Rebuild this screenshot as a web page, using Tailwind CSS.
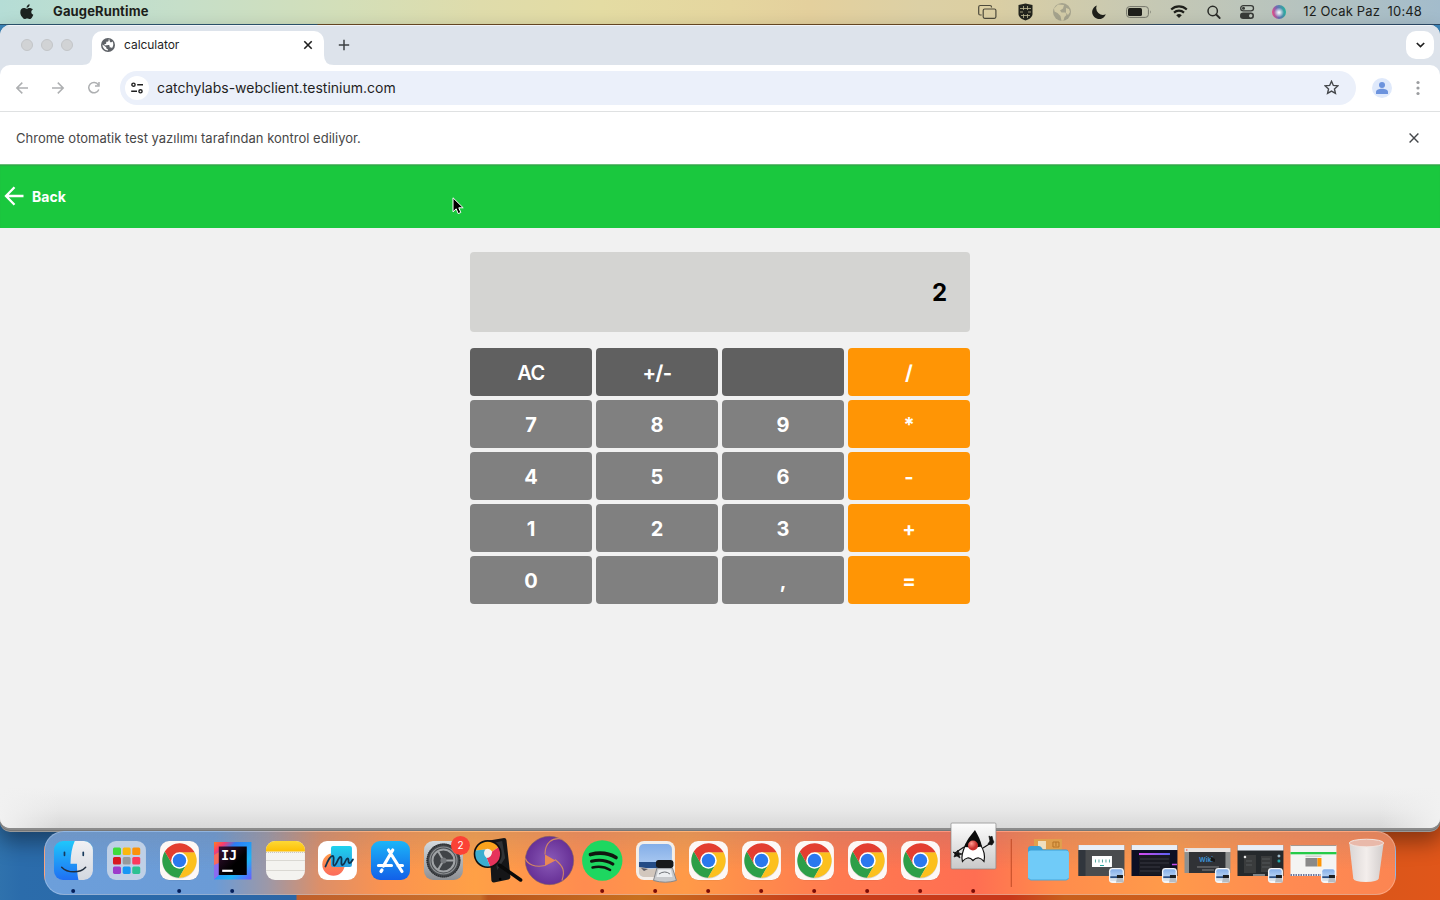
<!DOCTYPE html>
<html lang="tr">
<head>
<meta charset="utf-8">
<title>calculator</title>
<script src="https://cdn.jsdelivr.net/npm/@tailwindcss/browser@4"></script>
</head>
<body class="w-[1440px] h-[900px] overflow-hidden flex flex-col font-['Inter','Liberation_Sans',sans-serif] bg-[linear-gradient(180deg,#3c86bb_0px,#3c86bb_60px,transparent_61px),linear-gradient(90deg,#2f72ad_0px,#2b6cab_20px,#2b66a6_296px,#c0602c_297px,#c9702a_480px,#b8541c_488px,#c8701f_640px,#c8401a_800px,#c8371a_1010px,#c8601c_1065px,#d5561a_1300px,#e0561a_1440px)]">

<!-- Menu bar -->
<header class="h-6 shrink-0 flex items-center justify-between pl-5 pr-[18px] text-[#1d1f1c] bg-[linear-gradient(90deg,#b5ddd6_0px,#c6dfc9_180px,#d3dfb9_340px,#dfdcab_480px,#e4dca3_600px,#e5d69f_730px,#e4d09d_810px,#dcd0a5_920px,#dccfa2_980px,#c8c9b2_1130px,#b6c3bf_1300px,#a3bccc_1440px)]">
  <div class="flex items-center">
    <svg class="w-[14px] h-4 -mt-px" viewBox="0 0 14 16" fill="#1d2220"><path d="M9.6.2c.1 1-.3 1.900-.8 2.500-.6.7-1.400 1.100-2.200 1.100-.1-.9.300-1.900.8-2.400C8 .7 8.900.3 9.600.2zM12.900 5.500c-1 .6-1.600 1.500-1.600 2.600 0 1.300.8 2.300 2 2.700-.3.900-.7 1.700-1.200 2.400-.7 1-1.300 1.900-2.400 1.900-1 0-1.300-.6-2.500-.6s-1.600.6-2.500.6c-1 0-1.800-1-2.500-2C.8 11.500.3 9.800.3 8.200c0-2.700 1.700-4.100 3.500-4.100 1.100 0 2 .7 2.700.7s1.700-.8 3-.8c1.300 0 2.600.5 3.400 1.500z"/></svg>
    <span class="ml-[19px] -mt-[2px] text-[13px] font-bold leading-6 tracking-[0.13px]">GaugeRuntime</span>
  </div>
  <div class="flex items-center">
    <svg class="w-[325px] h-6" viewBox="0 0 325 24" fill="none">
      <g stroke="#4e4b3c" stroke-width="1.200"><rect x="5.200" y="9" width="12.700" height="9.300" rx="1.500"/><path d="M3.700 15h-1.500a1.500 1.500 0 0 1-1.500-1.500V7a1.500 1.500 0 0 1 1.500-1.500h9.800a1.500 1.500 0 0 1 1.500 1.500v.6"/></g>
      <path d="M47.500 3.500l7 1.500v9c0 3.500-4 5.500-7 6.500-3-1-7-3-7-6.500V5z" fill="#23241d"/>
      <path d="M42 8.500h11M42 12h11M43 15.500h9M45.500 6v12M49.500 6v12" stroke="#bdb892" stroke-width=".8"/><rect x="45" y="10" width="5" height="4" fill="#23241d"/>
      <circle cx="84" cy="12" r="9" fill="#a5a38d"/><path d="M80 4.500l6 .5-1 3.500-3 2 1.500 2h4l1 2.500-2 2-1 3.500-2 .5-1-5-3-3-3-1.500-.5-3zM88 8l3 1 1 3-2 3-2-2z" fill="#d2cba7"/>
      <path d="M118.800 5.500a7 7 0 1 0 9 8.800 6.800 6.800 0 0 1-9-8.800z" fill="#1f201b"/>
      <rect x="148.600" y="6.600" width="21.800" height="10.800" rx="3" stroke="#74766a"/><rect x="150" y="8" width="14" height="8" rx="1.600" fill="#1f201b"/><path d="M172 10.200q1.600 1.700 0 3.600z" fill="#74766a"/>
      <g stroke="#1f201b" stroke-width="2.200"><path d="M193.200 9.500a11.500 11.500 0 0 1 15.600 0"/><path d="M196 12.600a7.500 7.500 0 0 1 10 0"/></g><path d="M198.200 15.200a4.200 4.200 0 0 1 5.600 0L201 18z" fill="#1f201b"/>
      <circle cx="234.700" cy="11" r="4.700" stroke="#292b27" stroke-width="1.500"/><path d="M238.200 14.500l3.500 3.500" stroke="#292b27" stroke-width="1.800" stroke-linecap="round"/>
      <rect x="262.700" y="5.700" width="12.800" height="5.200" rx="2.600" stroke="#383b38" stroke-width="1.300"/><circle cx="265.500" cy="8.300" r="1.500" fill="#383b38"/><rect x="262" y="12.500" width="14" height="6.400" rx="3.200" fill="#383b38"/><circle cx="272.700" cy="15.700" r="1.700" fill="#bcc5bb"/>
      <defs><radialGradient id="siri"><stop offset="0" stop-color="#fff"/><stop offset=".35" stop-color="#fff" stop-opacity=".7"/><stop offset="1" stop-color="#fff" stop-opacity="0"/></radialGradient><linearGradient id="siri2" x1="0" y1=".6" x2="1" y2=".4"><stop stop-color="#ee4a86"/><stop offset=".4" stop-color="#6d6bb5"/><stop offset="1" stop-color="#22b59d"/></linearGradient></defs>
      <circle cx="301" cy="12" r="7" fill="url(#siri2)"/><circle cx="301" cy="12.500" r="5" fill="url(#siri)"/>
    </svg>
    <span class="w-[119px] -mt-[2px] text-right text-[13px] leading-6 whitespace-pre tracking-[0.14px]">12 Ocak Paz  10:48</span>
  </div>
</header>

<!-- Browser window -->
<div class="h-px shrink-0 bg-[linear-gradient(90deg,#2c5570_0px,#2c5570_317px,#6b4a24_318px,#6b4a24_1080px,#2c4a68_1160px)]"></div>
<main class="h-[803px] shrink-0 flex flex-col rounded-[10px] overflow-hidden bg-[#f1f1f1] shadow-[0_2px_0_#8b8b8b,0_3px_0_#777,0_4px_0_#999,0_12px_22px_2px_rgba(0,0,0,0.4)]">
  <div class="h-10 shrink-0 flex items-end bg-[#dde3eb] border-t border-white/60">
    <div class="flex gap-2 mb-[14px] ml-[21px]">
      <i class="size-3 rounded-full bg-[#d1d3d5] border border-[#c3c5c8]"></i>
      <i class="size-3 rounded-full bg-[#d1d3d5] border border-[#c3c5c8]"></i>
      <i class="size-3 rounded-full bg-[#d1d3d5] border border-[#c3c5c8]"></i>
    </div>
    <svg class="ml-[9px] w-[10px] h-[10px]" viewBox="0 0 10 10"><path d="M10 0v10H0q10 0 10-10" fill="#fff"/></svg>
    <div class="w-[232px] h-[34px] bg-white rounded-t-[10px] flex items-center pl-[9px]">
      <svg class="size-[14px] mt-[-6px]" viewBox="0 0 14 14"><circle cx="7" cy="7" r="7" fill="#5f6368"/><path d="M8.300 1.600v.7c0 .8-.6 1.300-1.400 1.300H5.600v1.300c0 .4-.3.700-.7.700H3.600v1.400h4.100c.4 0 .7.3.7.700v2h.7c.6 0 1.100.4 1.300 1 1.400-1.400 2.300-3.300 1.900-5.200-.1-.5-.2-.9-.4-1.300-.8.900-2.400.9-2.600-.3V3.300c0-.6-.3-1-.3-1.700zM6.300 12.500v-1.400c-.8 0-1.400-.6-1.400-1.400v-.7L1.600 5.800c-.6 3.300 1.700 6.300 4.700 6.700z" fill="#fff" transform="rotate(-8 7 7)"/></svg>
      <span class="ml-[9px] mt-[-6px] text-xs text-[#1f1f1f] tracking-[-0.04px] flex-1">calculator</span>
      <svg class="size-[10px] mr-[11px] mt-[-6px]" viewBox="0 0 10 10" stroke="#1f1f1f" stroke-width="1.600"><path d="M1.300 1.300l7.400 7.400M8.700 1.300L1.300 8.700"/></svg>
    </div>
    <svg class="w-[10px] h-[10px]" viewBox="0 0 10 10"><path d="M0 0v10h10Q0 10 0 0" fill="#fff"/></svg>
    <svg class="ml-1 mb-[14px] size-3" viewBox="0 0 12 12" stroke="#3c4043" stroke-width="1.500"><path d="M6 .8v10.400M.8 6h10.400"/></svg>
    <div class="ml-auto mr-[6px] mb-[6px] size-7 rounded-[10px] bg-white flex items-center justify-center">
      <svg class="w-[9px] h-[6px]" viewBox="0 0 9 6" fill="none" stroke="#1f1f1f" stroke-width="1.700"><path d="M.8 1l3.700 3.600L8.200 1"/></svg>
    </div>
  </div>

  <div class="shrink-0 bg-[#dde3eb]">
    <div class="h-[47px] bg-white rounded-t-[10px] border-b border-[#dfe1e2] flex items-center">
      <svg class="ml-4 w-[88px] h-4" viewBox="0 0 88 16" fill="none" stroke="#adafb1" stroke-width="1.500"><path d="M12 8H1M6.300 2.600L.9 8l5.400 5.400M36 8h11M41.800 2.600L47.200 8l-5.400 5.400M82.300 4.800A5.200 5.200 0 1 0 82.800 9.500M83 2v4h-4"/></svg>
      <div class="ml-4 w-[1236px] h-[34px] rounded-full bg-[#ebf0fa] flex items-center pl-[5px] pr-[17px]">
        <div class="size-6 rounded-full bg-white flex items-center justify-center">
          <svg class="w-3 h-3" viewBox="0 0 12 12" fill="none" stroke="#1f1f1f" stroke-width="1.400"><circle cx="2.500" cy="2.700" r="1.600"/><path d="M6.200 2.700H12M.2 9.300H6"/><circle cx="9.500" cy="9.300" r="1.600"/></svg>
        </div>
        <span class="ml-2 -mt-[2px] flex-1 text-[14px] text-[#1f1f1f]">catchylabs-webclient.testinium.com</span>
        <svg class="size-[15px] -mt-px" viewBox="0 0 15 15" fill="none" stroke="#45484b" stroke-width="1.400"><path d="M7.500 1.300l1.850 4.150 4.500.45-3.400 3 .98 4.450L7.500 11.050l-3.930 2.300.98-4.450-3.400-3 4.500-.45z"/></svg>
      </div>
      <svg class="ml-4 size-5" viewBox="0 0 20 20"><circle cx="10" cy="10" r="10" fill="#dfe9fb"/><circle cx="10" cy="7" r="3" fill="#6c93dd"/><path d="M4 16v-2c0-2 3-3.200 6-3.200s6 1.200 6 3.200v2z" fill="#6c93dd"/></svg>
      <svg class="ml-6 w-1 h-4" viewBox="0 0 4 16" fill="#9b9d9f"><circle cx="2" cy="2.500" r="1.600"/><circle cx="2" cy="8" r="1.600"/><circle cx="2" cy="13.500" r="1.600"/></svg>
    </div>
  </div>

  <div class="h-[52px] shrink-0 bg-white flex items-center justify-between pl-4 pr-[21px]">
    <span class="mt-[2px] text-[13px] text-[#474747] tracking-[0.01px]">Chrome otomatik test yazılımı tarafından kontrol ediliyor.</span>
    <svg class="size-[10px]" viewBox="0 0 10 10" stroke="#45484b" stroke-width="1.400"><path d="M.6.600l8.800 8.800M9.400.6L.6 9.400"/></svg>
  </div>

  <div class="h-16 shrink-0 bg-[#1ac83e] border-t border-[#69bd78] shadow-[inset_0_1px_1px_#2eab49] flex items-center pl-1 text-white">
    <svg class="w-5 h-5 -mt-[2px]" viewBox="0 0 20 20" fill="none" stroke="#fff" stroke-width="2.300"><path d="M19.500 10H2.500M10.500 1.300L2 10l8.500 8.700"/></svg>
    <span class="ml-2 text-[14px] font-bold">Back</span>
    <svg class="ml-[386px] mt-[18px] w-3 h-[18px]" viewBox="0 0 12 18"><path d="M1 .800v14l3.200-3 2 4.800 2.600-1.100-2-4.700h4.400z" fill="#000" stroke="#fff"/></svg>
  </div>

  <section class="flex-1 flex flex-col items-center pt-6 bg-[linear-gradient(90deg,#f1f1f1_0px,rgba(241,241,241,0)_60px,rgba(241,241,241,0)_1380px,#f1f1f1_1440px),linear-gradient(#f1f1f1_560px,#e8e8e8_582px,#d8d8d8_600px)]">
    <div class="w-[500px] h-20 rounded bg-[#d4d4d2] flex items-center justify-end pr-[23px] text-2xl font-bold text-black"><span class="mt-[2px]">2</span></div>
    <div class="mt-4 w-[500px] grid grid-cols-4 auto-rows-[48px] gap-1 text-xl font-bold text-white *:rounded *:flex *:items-center *:justify-center *:pt-[2px]">
      <button class="bg-[#606060] tracking-[-0.5px] font-semibold">AC</button><button class="bg-[#606060] tracking-[-0.5px]">+/-</button><button class="bg-[#606060]"></button><button class="bg-[#ff9505]">/</button>
      <button class="bg-[#808080]">7</button><button class="bg-[#808080]">8</button><button class="bg-[#808080]">9</button><button class="bg-[#ff9505]">*</button>
      <button class="bg-[#808080]">4</button><button class="bg-[#808080]">5</button><button class="bg-[#808080]">6</button><button class="bg-[#ff9505]">-</button>
      <button class="bg-[#808080]">1</button><button class="bg-[#808080]">2</button><button class="bg-[#808080]">3</button><button class="bg-[#ff9505]">+</button>
      <button class="bg-[#808080]">0</button><button class="bg-[#808080]"></button><button class="bg-[#808080]">,</button><button class="bg-[#ff9505]">=</button>
    </div>
  </section>
</main>

<!-- Shared icon parts -->
<svg class="absolute w-0 h-0">
  <defs>
    <linearGradient id="finder" x2="0" y2="1"><stop stop-color="#1fc7fb"/><stop offset="1" stop-color="#1f6ff3"/></linearGradient>
    <linearGradient id="pale" x2="0" y2="1"><stop stop-color="#f1f1f4"/><stop offset="1" stop-color="#d3d8e0"/></linearGradient>
    <linearGradient id="store" x2="0" y2="1"><stop stop-color="#1cb5f8"/><stop offset="1" stop-color="#1260e8"/></linearGradient>
    <linearGradient id="ij" x1="0" y1="0" x2="1" y2="1"><stop stop-color="#fc801d"/><stop offset=".15" stop-color="#fb3a6e"/><stop offset=".3" stop-color="#2d7cf6"/><stop offset=".7" stop-color="#1cb4f5"/><stop offset="1" stop-color="#6b57ff"/></linearGradient>
    <linearGradient id="ijin" x1="0" y1="0" x2="1" y2="1"><stop stop-color="#3b1238"/><stop offset=".6" stop-color="#000"/></linearGradient>
    <linearGradient id="gear" x2="0" y2="1"><stop stop-color="#d5dade"/><stop offset="1" stop-color="#8d8f93"/></linearGradient>
    <linearGradient id="notes" x2="0" y2="1"><stop stop-color="#fdd835"/><stop offset="1" stop-color="#fdbf05"/></linearGradient>
    <linearGradient id="duke" x2="0" y2="1"><stop stop-color="#fdfdfd"/><stop offset="1" stop-color="#c9c9c9"/></linearGradient>
    <linearGradient id="sky" x2="0" y2="1"><stop stop-color="#84aee8"/><stop offset="1" stop-color="#c0d9f7"/></linearGradient>
    <linearGradient id="aqua" x2="0" y2="1"><stop stop-color="#1fd3ee"/><stop offset="1" stop-color="#2a9edf"/></linearGradient>
    <linearGradient id="peach" x2="0" y2="1"><stop stop-color="#ff9c4a"/><stop offset="1" stop-color="#fc6b5d"/></linearGradient>
    <linearGradient id="bin"><stop stop-color="#d9d9da"/><stop offset=".5" stop-color="#f3f2f2"/><stop offset="1" stop-color="#d0d0d1"/></linearGradient>
    <linearGradient id="neon"><stop stop-color="#d94bf0"/><stop offset="1" stop-color="#5b63f5"/></linearGradient>
    <radialGradient id="nose" cx=".35" cy=".3"><stop stop-color="#ff9b91"/><stop offset="1" stop-color="#c8312f"/></radialGradient>
    <radialGradient id="violet"><stop stop-color="#8a5ab8"/><stop offset="1" stop-color="#673096"/></radialGradient>
    <g id="chrome">
      <rect x="7" y="10.200" width="39" height="39" rx="9" fill="#000" opacity=".18"/>
      <rect x="7" y="10" width="39" height="39" rx="9" fill="#fdf8f5"/>
      <g transform="translate(26.500 29.500)">
        <circle r="17.200" cy=".8" fill="#000" opacity=".15"/>
        <path d="M-14.650-8.980A17.200 17.200 0 0 0-.45 17.180L7.100 4.100 0 0-7.100 4.100z" fill="#2d9f48"/>
        <path d="M15.100-8.200A17.200 17.200 0 0 1-.45 17.180L7.100 4.100 0 0V-8.200z" fill="#fcc01d"/>
        <path d="M-14.650-8.980A17.200 17.200 0 0 1 15.100-8.200H0V0L-7.100 4.100z" fill="#e33e30"/>
        <circle r="8.300" fill="#fff"/><circle r="6.700" fill="#2a78ee"/>
      </g>
    </g>
    <g id="photo">
      <rect width="15" height="15" rx="3.500" fill="#f4f6f9"/><rect x="1.300" y="1.300" width="12.400" height="9" rx="2" fill="url(#sky)"/><rect x="1.300" y="8.300" width="12.400" height="2" fill="#2b4f83"/><path d="M1.300 10.300h12.400v2.700H1.300z" fill="#dde3ea"/><rect x="8" y="7" width="6" height="3" fill="#1d1e20"/><path d="M8 10h6l1 4.500H7z" fill="#b7bcc2"/>
    </g>
    <circle id="dot" cx="26.200" cy="60" r="2" fill="#7b0c06"/>
  </defs>
</svg>

<!-- Dock -->
<footer class="mt-[3px] ml-11 w-[1352px] h-16 shrink-0 relative rounded-[20px] border border-white/25 flex pl-[1.800px] bg-[linear-gradient(180deg,rgba(120,120,130,0.22),rgba(255,170,70,0)_60%),linear-gradient(90deg,#6c9fdb_0px,#6b9bd6_170px,#9c98a8_222px,#dd8f68_275px,#fb9350_340px,#ffa046_430px,#ff8c50_540px,#ff9a48_640px,#ff7a50_790px,#ff6e52_930px,#ff8c4c_1010px,#ff9a4a_1120px,#ff8a52_1250px,#fc8552_1352px)] *:w-[52.94px] *:h-16 *:shrink-0 *:overflow-visible *:-mt-px">
  <svg viewBox="0 0 53 64"><rect x="7" y="10" width="39" height="39" rx="9" fill="url(#finder)"/><path d="M27.800 10H37a9 9 0 0 1 9 9v21a9 9 0 0 1-9 9h-5.500c-.9-4-1.500-9-1.500-16.200h-6.500C23.700 23.500 25 16 27.800 10z" fill="url(#pale)"/><path d="M17.500 21.300v3M36.300 21.300v3" stroke="#173a5c" stroke-width="1.700" stroke-linecap="round"/><path d="M14.700 36.200c6 6.200 18.500 6.200 24 0" fill="none" stroke="#222f3f" stroke-width="1.500" stroke-linecap="round"/><circle cx="26.200" cy="60" r="2" fill="#04205c"/></svg>
  <svg viewBox="0 0 53 64"><rect x="7" y="10" width="39" height="39" rx="9" fill="#bfd0e6"/><g><rect x="13" y="16.500" width="8" height="7.500" rx="1.500" fill="#3edc3c"/><rect x="22.700" y="16.500" width="8" height="7.500" rx="1.500" fill="#fbb70d"/><rect x="32.300" y="16.500" width="8" height="7.500" rx="1.500" fill="#fa910a"/><rect x="13" y="26" width="8" height="7.500" rx="1.500" fill="#d81820"/><rect x="22.700" y="26" width="8" height="7.500" rx="1.500" fill="#96999c"/><rect x="32.300" y="26" width="8" height="7.500" rx="1.500" fill="#fb395c"/><rect x="13" y="35.500" width="8" height="7.500" rx="1.500" fill="#9c3ccb"/><rect x="22.700" y="35.500" width="8" height="7.500" rx="1.500" fill="#1897f4"/><rect x="32.300" y="35.500" width="8" height="7.500" rx="1.500" fill="#2cc192"/></g></svg>
  <svg viewBox="0 0 53 64"><use href="#chrome"/><circle cx="26.200" cy="60" r="2" fill="#04205c"/></svg>
  <svg viewBox="0 0 53 64"><rect x="8" y="11" width="37.500" height="37.500" fill="url(#ij)"/><path d="M8 24l5-3v14l-5 2z" fill="#f76a5c"/><path d="M8 34l5-2v12l-5 4.500z" fill="#8a6cf0"/><rect x="12.800" y="15.500" width="28" height="28.500" fill="url(#ijin)"/><path d="M16.200 39.800h10.500" stroke="#fff" stroke-width="2.200"/><text x="15" y="29.300" font-family="DejaVu Sans Mono" font-weight="700" font-size="13.500" fill="#fff">IJ</text><circle cx="26.200" cy="60" r="2" fill="#04205c"/></svg>
  <svg viewBox="0 0 53 64"><rect x="7" y="10" width="39" height="39" rx="9" fill="#f4f3f0"/><path d="M7 20.500V19a9 9 0 0 1 9-9h21a9 9 0 0 1 9 9v1.500z" fill="url(#notes)"/><path d="M7 21.500h39" stroke="#c9c6be" stroke-dasharray="1 1"/><path d="M7 29.500h39M7 39.500h39" stroke="#dad8d3"/></svg>
  <svg viewBox="0 0 53 64"><rect x="7" y="10" width="39" height="39" rx="9" fill="#fff"/><circle cx="22.500" cy="33.500" r="11.200" fill="url(#peach)"/><rect x="20" y="15" width="21" height="21" rx="2" fill="url(#aqua)"/><path d="M14.500 35.500c2-5 4.500-10.500 7-10.500 2.800 0-.5 9 1.500 9.500 2.500.5 4-8.500 6.500-8.500s-.5 8 2 8 3-6.500 5-6.500 0 4.500 2 4.500 2-2 3.500-3.500" fill="none" stroke="#0f3550" stroke-width="1.800" stroke-linecap="round"/></svg>
  <svg viewBox="0 0 53 64"><rect x="7" y="10" width="39" height="39" rx="9" fill="url(#store)"/><g stroke="#fff" stroke-width="3.200" stroke-linecap="round"><path d="M28.800 19L19.500 35M24.500 19l13.500 21.500M14.500 34.500h13M34 34.500h4.500M18 39l-1 1.500"/></g></svg>
  <svg viewBox="0 0 53 64"><rect x="7" y="10" width="39" height="39" rx="9" fill="url(#gear)"/><circle cx="26.500" cy="29.500" r="17" fill="#45484c"/><circle cx="26.500" cy="29.500" r="16.200" fill="none" stroke="#292b2e" stroke-width="1.600" stroke-dasharray="1 1"/><circle cx="26.500" cy="29.500" r="13.500" fill="none" stroke="#8d9093" stroke-width="1.200"/><circle cx="26.500" cy="29.500" r="11" fill="#404347" stroke="#a0a3a6" stroke-width="2"/><path d="M26.500 29.500h11M26.500 29.500l-5.500-9.500M26.500 29.500l-5.500 9.500" stroke="#a0a3a6" stroke-width="2"/><circle cx="26.500" cy="29.500" r="3" fill="#74777b"/><circle cx="43.500" cy="14.500" r="9.500" fill="#fb4236"/><text x="43.500" y="18" font-size="10" font-family="Inter" text-anchor="middle" fill="#fff">2</text></svg>
  <svg viewBox="0 0 53 64"><g transform="translate(-.8 0)"><path d="M20 9.500l15-2.500q2 0 2.300 2l4 37q0 2-2 2.400l-14.500 3.100q-2.300.2-2.600-2z" fill="#151618"/><path d="M24 12l9-2 3 17-8 12z" fill="#303235"/><circle cx="31" cy="48" r="1.300" fill="#000"/><path d="M30 34l21.500 15" stroke="#0a0a0a" stroke-width="3.500" stroke-linecap="round"/><g transform="translate(0 .5)"><circle cx="18.500" cy="22.500" r="13" fill="#f5efee"/><path d="M6 19A13 13 0 0 1 29.500 15.500L23 20q-3-4-7-2z" fill="#fba31d"/><path d="M29.500 15.500A13 13 0 0 1 21 35.300L17.500 26.500q5 0 5.500-6.500z" fill="#e6335b"/><path d="M21 35.300A13 13 0 0 1 6 19l10-1q-3 5 1.500 8.500z" fill="#3badd0"/><circle cx="18.500" cy="22.500" r="13.200" fill="none" stroke="#111" stroke-width="1.600"/></g></g></svg>
  <svg viewBox="0 0 53 64"><circle cx="26.500" cy="29.500" r="24.200" fill="url(#violet)" stroke="#80615f" stroke-width=".6"/><g fill="none" stroke="#d28764" stroke-width="1.100"><path d="M22 23.500C22 12 29 6 39 8"/><path d="M32 28.500c9 7 10 12 7 21"/><path d="M22 34.500C12 37 4 33 2.500 27.500"/></g><path d="M22 23.500l10.500 6L22 35z" fill="#e98955"/></svg>
  <svg viewBox="0 0 53 64"><circle cx="26.300" cy="29.500" r="20.200" fill="#1ed760"/><g fill="none" stroke="#10160f" stroke-linecap="round"><path d="M14.500 23.500c8.500-2.200 18-1.500 25.500 3" stroke-width="3.700"/><path d="M15.500 30.300c7.500-1.900 15-1 21.500 2.800" stroke-width="3"/><path d="M16.500 36.500c6.300-1.400 12.500-.7 17.700 2.500" stroke-width="2.400"/></g><use href="#dot"/></svg>
  <svg viewBox="0 0 53 64"><rect x="7" y="10" width="39" height="39" rx="8" fill="#f4eee9"/><rect x="10" y="13" width="33" height="33" rx="5" fill="url(#sky)"/><path d="M10 31h33v6H10z" fill="#244c86"/><path d="M10 36l7 1 5 1 6-1v9H15a5 5 0 0 1-5-5z" fill="#d2c7bd"/><path d="M12 37l7 1-4 2z" fill="#5b5a64"/><path d="M28 37h15.500l4 12.500q-11 3.500-23 0z" fill="#c7c9cc" stroke="#85878b"/><path d="M29.500 38.500H42l1.500 7.500h-16z" fill="#eceef0"/><path d="M30 43q6-4 11 0" stroke="#6c6f74" fill="none"/><rect x="27" y="29" width="17.500" height="8" rx="2.500" fill="#191a1c"/><use href="#dot"/></svg>
  <svg viewBox="0 0 53 64"><use href="#chrome"/><use href="#dot"/></svg>
  <svg viewBox="0 0 53 64"><use href="#chrome"/><use href="#dot"/></svg>
  <svg viewBox="0 0 53 64"><use href="#chrome"/><use href="#dot"/></svg>
  <svg viewBox="0 0 53 64"><use href="#chrome"/><use href="#dot"/></svg>
  <svg viewBox="0 0 53 64"><use href="#chrome"/><use href="#dot"/></svg>
  <svg viewBox="0 0 53 64"><rect x="4" y="-8" width="45" height="46" rx="1" fill="url(#duke)" stroke="#888" stroke-width=".7"/><path d="M17 16L8 22M36 17l8-5" stroke="#111" stroke-width="1.200"/><path d="M6 21l4 1 1-3 1 3 3 1-3 1 1 3-3-2-3 1 1-3zM41 13l2-3-1-5 2 1 1-1 1 4 1 2-2 3z" fill="#111" stroke="#111" stroke-width=".7"/><path d="M19 13c-4 8-5 13-3.500 17.500 3-4 7-5 10.500-1 4-4 8-3 11 1C38.500 25 37 19 33 13z" fill="#fff" stroke="#111" stroke-width="1.200"/><path d="M28-1C24 4 19 10 17.500 16q8.500 1 17.500-.500C34 10 31 4 28-1z" fill="#0a0a0a"/><circle cx="26" cy="14.500" r="5" fill="url(#nose)"/><use href="#dot"/></svg>
  <svg viewBox="0 0 21 64" style="width:22.500px"><path d="M10.500 8v48" stroke="#c04a24"/></svg>
  <svg viewBox="0 0 53 64"><path d="M12 8h28v15H12z" fill="#e0a04e"/><path d="M16 10h8v8h-8z" fill="#f0dfbe"/><path d="M31 11h6v5h-6zM34 11v4" stroke="#b67327" fill="none"/><path d="M6 18q0-3 3-3h8q2 0 4 3.500h23q2.500 0 2.500 3V30H6z" fill="#3d9fd6"/><rect x="6" y="19.500" width="41" height="29.500" rx="3" fill="#70cbf8"/><path d="M6.500 47q.5 2 2.500 2h35q2 0 2.500-2" fill="none" stroke="#4ba9da"/></svg>
  <svg viewBox="0 0 53 64"><rect x="3.500" y="14" width="46" height="31" fill="#4a4c4e"/><rect x="3.500" y="14" width="46" height="5" fill="#e9eef6"/><rect x="3.500" y="19" width="7" height="26" fill="#31363d"/><rect x="17" y="25" width="20" height="11" fill="#fff"/><path d="M20 30h1M23.500 30h1M27 30h1M30.500 30h1M34 30h1" stroke="#58a8a0" stroke-width="3"/><path d="M25 34.500h4" stroke="#21a7a0"/><use href="#photo" x="34" y="37"/></svg>
  <svg viewBox="0 0 53 64"><rect x="3.500" y="14" width="46" height="31" fill="#0d0f24"/><rect x="3.500" y="14" width="46" height="5" fill="#e9eef6"/><rect x="11" y="22" width="31" height="22" fill="#191a22"/><rect x="11" y="22" width="31" height="2" fill="url(#neon)"/><path d="M12 28h29M12 32h29M12 36h20M12 40h20" stroke="#383943"/><path d="M44 33.500h5" stroke="#c54bea" stroke-width="1.500"/><use href="#photo" x="34" y="37"/></svg>
  <svg viewBox="0 0 53 64"><rect x="3.500" y="17" width="46" height="25" fill="#8e9090"/><rect x="3.500" y="17" width="46" height="4" fill="#e8e4e2"/><circle cx="5.800" cy="19" r=".8" fill="#f35b50"/><rect x="8" y="21" width="36.500" height="21" fill="#303236"/><text x="18" y="31" font-size="6.500" font-weight="700" fill="#3b8ed0">Wiki</text><path d="M30 26l4 2v3l-4-1z" fill="#161719"/><path d="M16 36h22M21 39h12" stroke="#999" stroke-width=".8"/><use href="#photo" x="34" y="37"/></svg>
  <svg viewBox="0 0 53 64"><rect x="3.500" y="14" width="46" height="31" fill="#25292c"/><rect x="3.500" y="14" width="46" height="5.500" fill="#e9eef6"/><path d="M10 24h12v18H10zM27 25h11v16H27z" fill="#3a3c3d"/><circle cx="11" cy="26" r="1.300" fill="#e9e9e9"/><path d="M28 28h8M28 32h8M28 36h8M12 30h6M12 34h6" stroke="#55595b"/><circle cx="45" cy="25" r="1.500" fill="#9cb8c8"/><circle cx="45" cy="30" r="1.500" fill="#21a5a7"/><path d="M19 44h12" stroke="#dce1e6"/><use href="#photo" x="34" y="37"/></svg>
  <svg viewBox="0 0 53 64"><rect x="3.500" y="14" width="46" height="31" fill="#f4f4f3"/><path d="M3.500 14.500h46" stroke="#a4978f"/><rect x="3.500" y="21" width="46" height="2.300" fill="#25cb48"/><rect x="18.500" y="24.500" width="16" height="1.500" fill="#d0d0cf"/><rect x="18.500" y="27" width="12" height="8.500" fill="#898989"/><rect x="30.500" y="27" width="4" height="8.500" fill="#ff9505"/><path d="M3.500 44h31" stroke="#6e779e" stroke-width="1.800" stroke-dasharray="1.500 1"/><use href="#photo" x="34" y="37"/></svg>
  <svg viewBox="0 0 53 64"><path d="M9.300 12l4 35.500q.5 3.500 12.500 3.500t13-3.500L43.700 12z" fill="url(#bin)" opacity=".96"/><ellipse cx="26.500" cy="12" rx="17.200" ry="3.800" fill="#e9b9aa" stroke="#f1e4df"/></svg>
</footer>
</body>
</html>
